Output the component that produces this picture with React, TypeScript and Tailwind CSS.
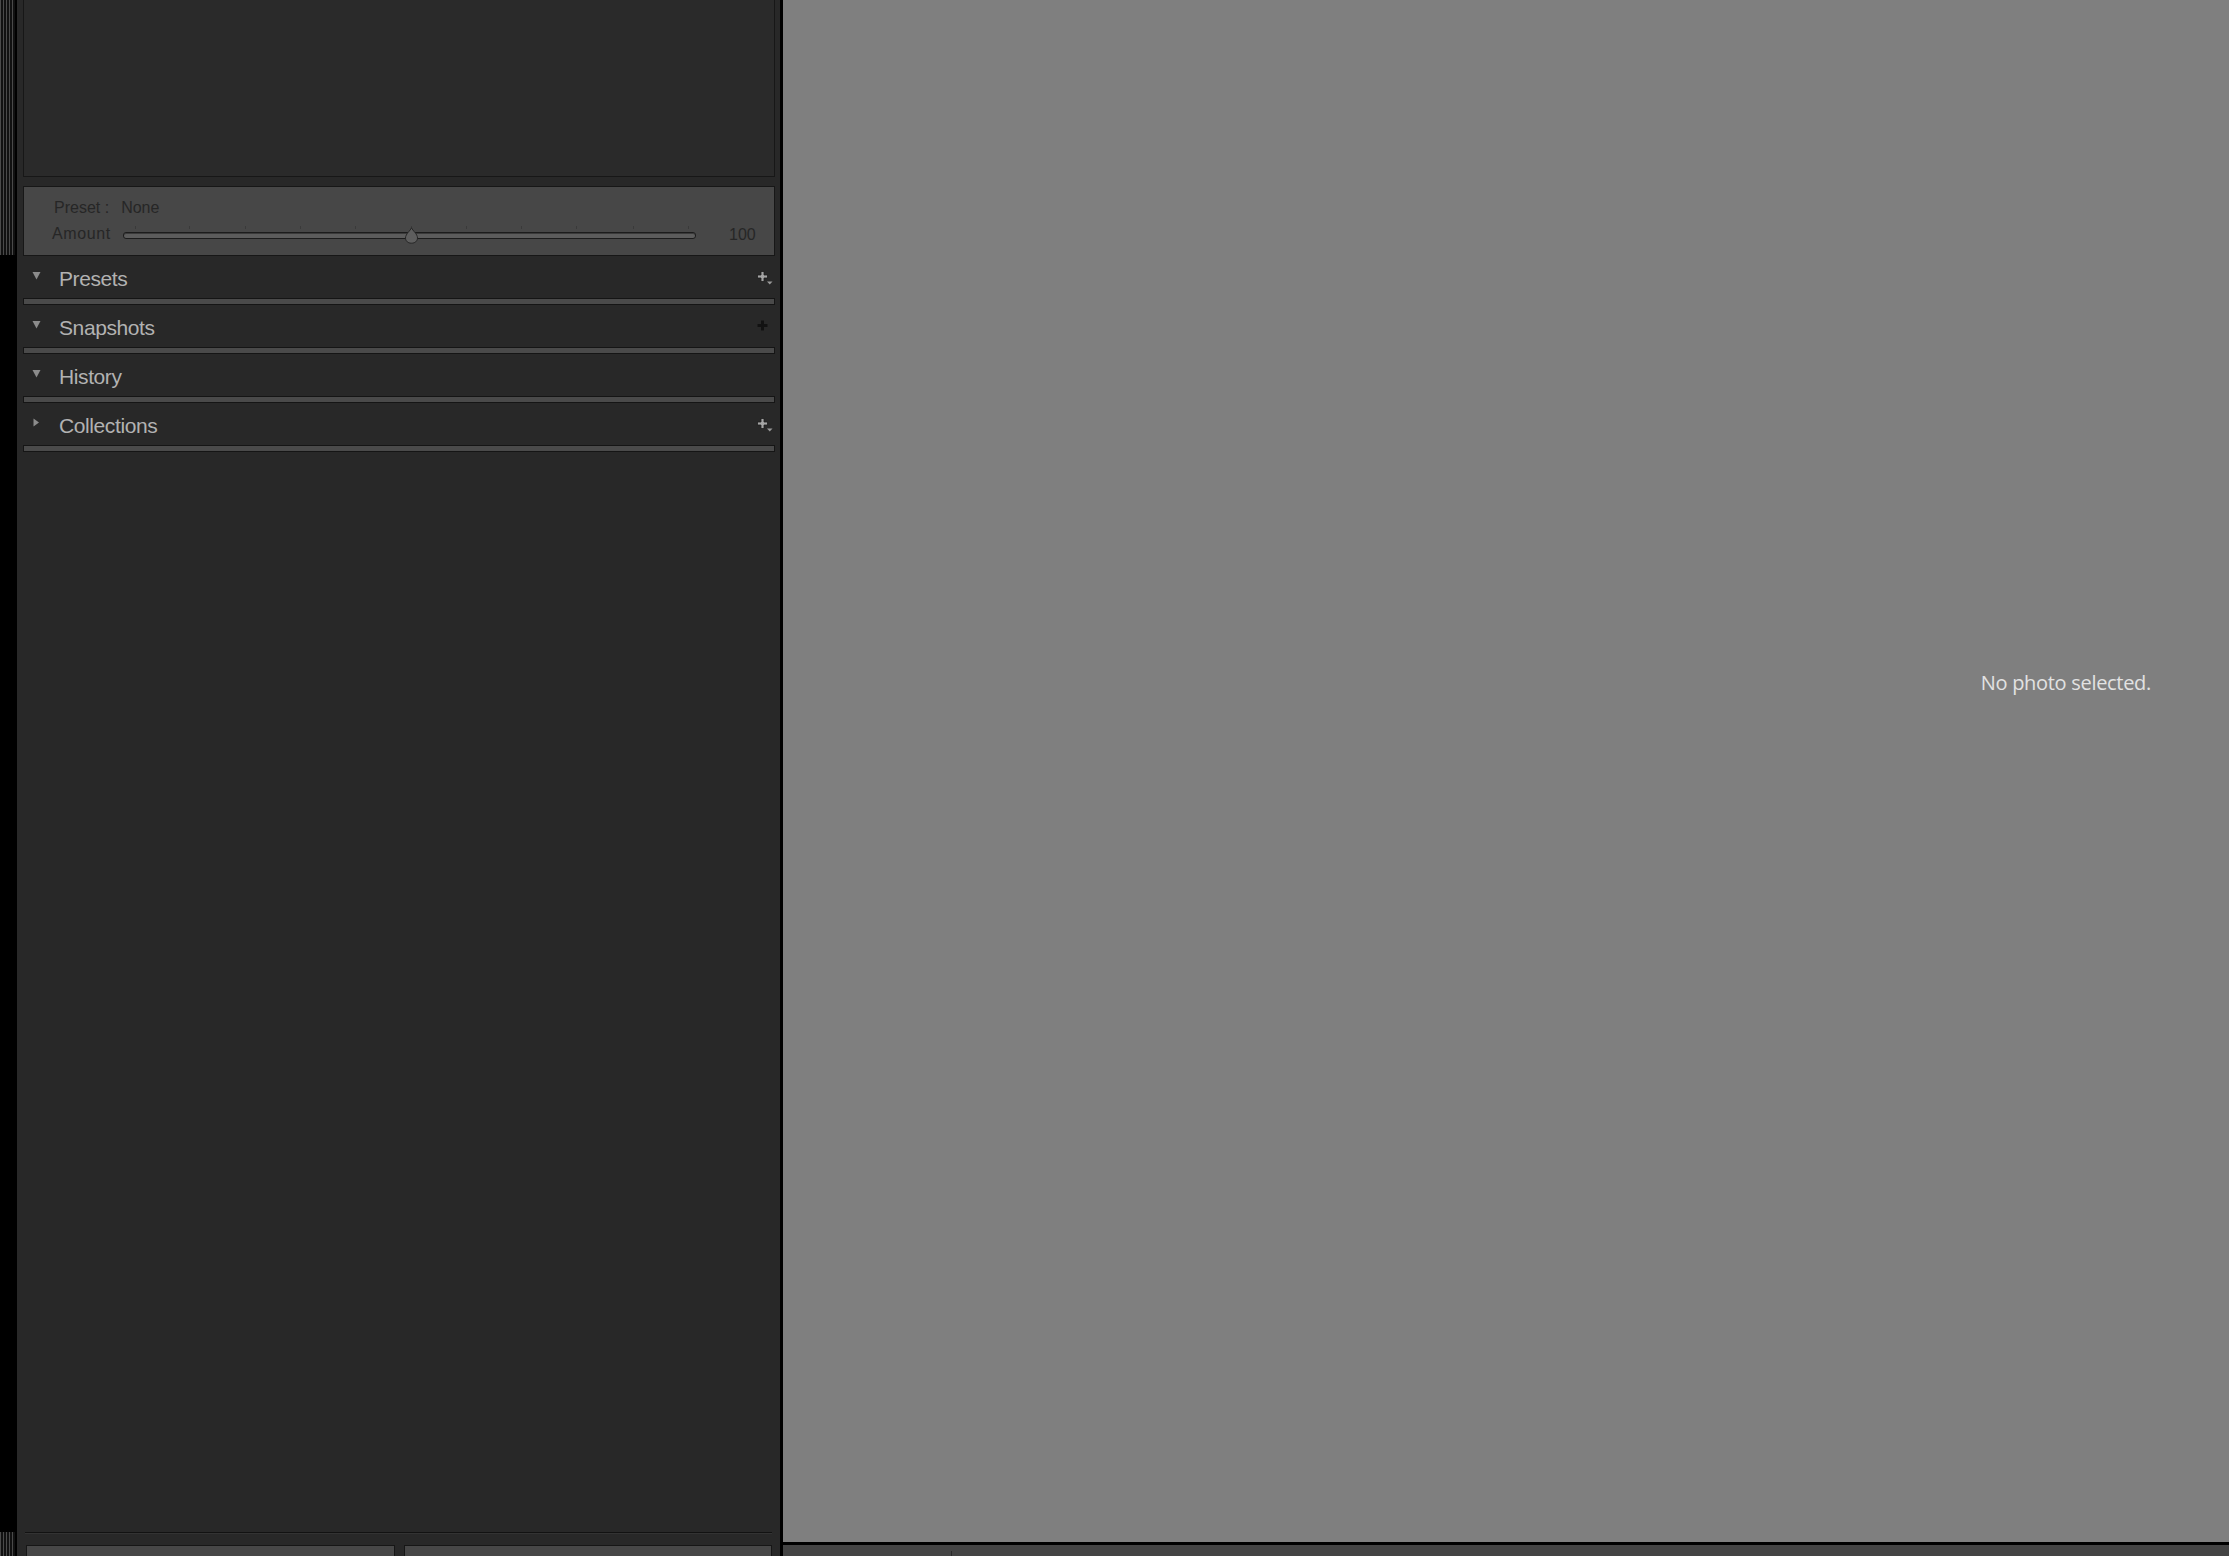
import React from "react";

// Left panel sections (collapsed empty panels)
const sections = [
  { name: "Presets", open: true, add: "menu" },
  { name: "Snapshots", open: true, add: "plain" },
  { name: "History", open: true, add: "none" },
  { name: "Collections", open: false, add: "menu" },
];

const ticks = [11, 65, 121, 176, 231, 287, 342, 397, 452, 509, 564];

const stripe =
  "bg-[repeating-linear-gradient(90deg,#4a4a4a_0px,#4a4a4a_1px,#111111_1px,#111111_3px)]";

const Disclosure = ({ open }: { open: boolean }) =>
  open ? (
    <svg width="9" height="9" viewBox="0 0 9 9">
      <path d="M0.5 1 L8.5 1 L4.5 8.5 Z" fill="#8c8c8c" />
    </svg>
  ) : (
    <svg width="9" height="9" viewBox="0 0 9 9">
      <path d="M1.5 0.5 L7 4.5 L1.5 8.5 Z" fill="#8c8c8c" />
    </svg>
  );

const PlusIcon = ({ kind }: { kind: string }) => {
  if (kind === "none") return null;
  const light = kind === "menu";
  return (
    <svg width="17" height="15" viewBox="0 0 17 15">
      <path
        d="M4 0.5 H7 V4 H10.5 V7 H7 V10.5 H4 V7 H0.5 V4 H4 Z"
        fill={light ? "#a4a4a4" : "#121212"}
        stroke={light ? "#1c1c1c" : "none"}
        strokeWidth="0.8"
      />
      {light && <path d="M10 10.5 H15.5 L12.75 13.5 Z" fill="#9a9a9a" />}
    </svg>
  );
};

export default function App() {
  return (
    <div className="w-[2229px] h-[1556px] flex bg-black overflow-hidden font-['Liberation_Sans',Arial,sans-serif]">
      {/* Far-left strip */}
      <div className="w-[17px] h-full flex flex-col bg-black">
        <div className={`w-[15px] h-[255px] ${stripe}`} />
        <div className="flex-1" />
        <div className={`w-[15px] h-[24px] ${stripe}`} />
      </div>

      {/* Left panel */}
      <div className="w-[763px] h-full bg-[#282828] flex flex-col pl-[6px] pr-[5px]">
        {/* Navigator preview */}
        <div className="h-[177px] shrink-0 border-x border-b border-[#171717] bg-[#2a2a2a]" />

        {/* Preset / amount box */}
        <div className="mt-[9px] h-[70px] shrink-0 border border-[#171717] bg-[#474747] pl-[30px] pt-[11px] text-[16px] leading-[20px] text-[#262626]">
          <div className="flex">
            <span>Preset :</span>
            <span className="ml-[12px]">None</span>
          </div>
          <div className="flex items-center mt-[4px] -ml-[2px]">
            <span className="w-[60px] tracking-[0.6px]">Amount</span>
            <div className="relative ml-[11px] w-[573px] h-[7px] mt-[3px] rounded-[3px] border border-[#1c1c1c] bg-[#5c5c5c] shadow-[inset_0_1px_0_#3a3a3a]">
              {ticks.map((t) => (
                <div
                  key={t}
                  className="absolute -top-[7px] w-px h-[3px] bg-[#3a3a3a]"
                  style={{ left: t }}
                />
              ))}
              <svg
                className="absolute -top-[6px] left-[280px]"
                width="15"
                height="17"
                viewBox="0 0 15 17"
              >
                <path
                  d="M7.5 0.8 C8.5 3.5 13.5 7 13.5 11 C13.5 14.2 10.8 16.2 7.5 16.2 C4.2 16.2 1.5 14.2 1.5 11 C1.5 7 6.5 3.5 7.5 0.8 Z"
                  fill="#5e5e5e"
                  stroke="#262626"
                  strokeWidth="1"
                />
              </svg>
            </div>
            <span className="ml-[33px] mt-[3px]">100</span>
          </div>
        </div>

        {/* Collapsible sections */}
        {sections.map((s) => (
          <div key={s.name} className="shrink-0">
            <div className="h-[42px] flex items-center pt-[4px]">
              <div className="w-[9px] ml-[9px] flex items-center -mt-[8px]">
                <Disclosure open={s.open} />
              </div>
              <span className="ml-[18px] text-[21px] text-[#b2b2b2] tracking-[-0.4px]">
                {s.name}
              </span>
              <div className="ml-auto mr-[1px] -mt-[2px] flex items-center">
                <PlusIcon kind={s.add} />
              </div>
            </div>
            <div className="h-[7px] border border-[#151515] bg-[#4a4a4a]" />
          </div>
        ))}

        <div className="flex-1" />

        {/* Bottom buttons (cut off by the window edge) */}
        <div className="ml-[2px] mr-[3px] h-px bg-[#121212] shrink-0" />
        <div className="ml-[2px] mr-[3px] h-px bg-[#333333] shrink-0" />
        <div className="mt-[11px] flex gap-[9px] ml-[3px] mr-[3px] shrink-0">
          <div className="w-[369px] h-[11px] border-x border-t border-[#161616] bg-[#474747]" />
          <div className="flex-1 h-[11px] border-x border-t border-[#161616] bg-[#474747]" />
        </div>
      </div>

      {/* Divider */}
      <div className="w-[3px] h-full bg-black" />

      {/* Main view */}
      <div className="flex-1 h-full flex flex-col">
        <div className="h-[1542px] bg-[#7f7f7f] flex justify-end items-start pr-[78px] pt-[671px]">
          <span className="text-[20px] leading-[24px] text-[#e2e2e2] font-['Open_Sans',Arial,sans-serif] tracking-[-0.3px]">
            No photo selected.
          </span>
        </div>
        <div className="h-[3px] bg-black" />
        <div className="flex-1 bg-[#444444] flex items-end pl-[168px]">
          <div className="w-px h-[5px] bg-[#2a2a2a]" />
        </div>
      </div>
    </div>
  );
}
